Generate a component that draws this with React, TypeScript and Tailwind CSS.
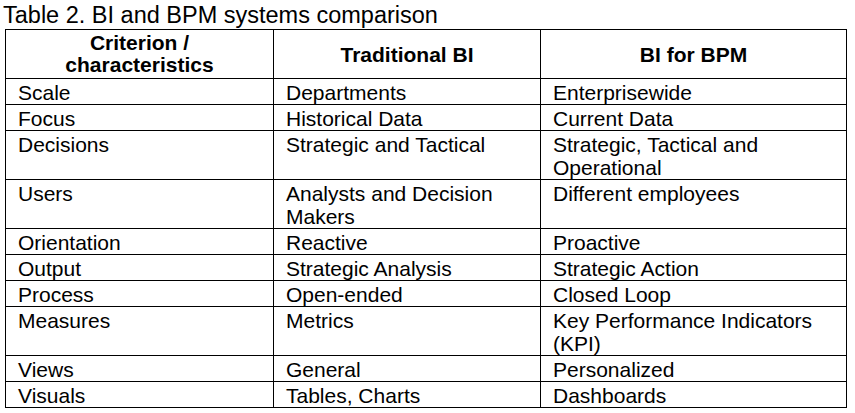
const rows: [string, string, string][] = [
  ["Scale", "Departments", "Enterprisewide"],
  ["Focus", "Historical Data", "Current Data"],
  ["Decisions", "Strategic and Tactical", "Strategic, Tactical and Operational"],
  ["Users", "Analysts and Decision Makers", "Different employees"],
  ["Orientation", "Reactive", "Proactive"],
  ["Output", "Strategic Analysis", "Strategic Action"],
  ["Process", "Open-ended", "Closed Loop"],
  ["Measures", "Metrics", "Key Performance Indicators (KPI)"],
  ["Views", "General", "Personalized"],
  ["Visuals", "Tables, Charts", "Dashboards"],
];

export default function App() {
  return (
    <div className="w-[855px] h-[413px] bg-white text-black font-['Liberation_Sans',Arial,sans-serif] pl-[5px] pt-[1px]">
      <h1 className="text-[23.5px] leading-[28px] -ml-[2px] font-normal">
        Table 2. BI and BPM systems comparison
      </h1>
      <table className="w-[841px] border-collapse border border-black table-fixed text-[21px] leading-[23px]">
        <colgroup>
          <col className="w-[268px]" />
          <col className="w-[267px]" />
          <col className="w-[306px]" />
        </colgroup>
        <thead>
          <tr className="h-[49px]">
            <th className="border border-black font-bold align-middle text-center leading-[22px]">
              Criterion /<br />characteristics
            </th>
            <th className="border border-black font-bold align-middle text-center">Traditional BI</th>
            <th className="border border-black font-bold align-middle text-center">BI for BPM</th>
          </tr>
        </thead>
        <tbody>
          {rows.map((r) => (
            <tr key={r[0]}>
              {r.map((c, i) => (
                <td key={i} className="border border-black align-top pl-3 pr-2 pt-[2px] pb-0">
                  {c}
                </td>
              ))}
            </tr>
          ))}
        </tbody>
      </table>
    </div>
  );
}
